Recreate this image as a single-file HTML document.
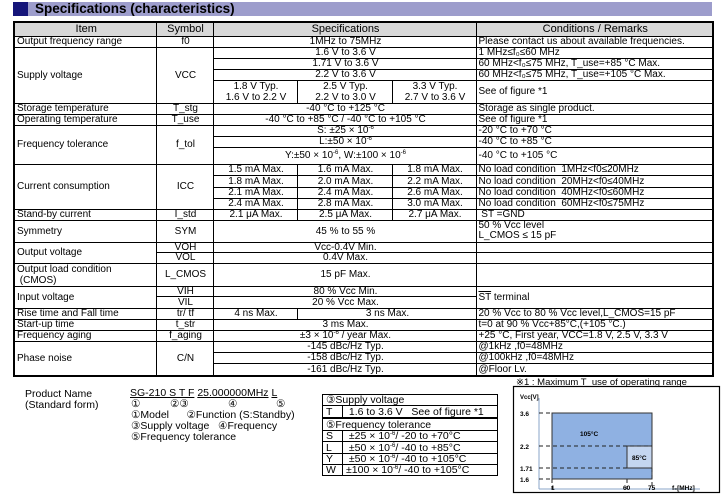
<!DOCTYPE html>
<html><head><meta charset="utf-8"><style>
*{margin:0;padding:0;box-sizing:border-box}
body{width:726px;height:503px;background:#fff;font-family:"Liberation Sans",Arial,sans-serif;color:#000;position:relative;overflow:hidden;font-size:10px}
.bar{position:absolute;left:13px;top:2px;width:699px;height:14px;background:#9d9dcc}
.sq{position:absolute;left:13px;top:2px;width:15px;height:14px;background:#15157a}
.title{position:absolute;left:35px;top:0px;font-weight:bold;font-size:13.5px;line-height:17px}
table.m{position:absolute;left:13px;top:21px;width:699px;border-collapse:collapse;table-layout:fixed;border:2px solid #000}
table.m td{border:1px solid #000;padding:0 0 0 2px;font-size:10px;line-height:9px;white-space:nowrap;overflow:hidden;vertical-align:middle}
td.c{text-align:center;padding:0}
tr.h td{background:#d8d8d8;text-align:center;font-size:11px}
sup{font-size:6px;line-height:0;vertical-align:4px}
.bt{position:absolute;font-size:10.5px;line-height:11px;white-space:nowrap}
.u{text-decoration:underline}
table.s{position:absolute;border-collapse:collapse;border:1.5px solid #000}
table.s td{border:1px solid #000;font-size:10.5px;line-height:10px;padding:0 3px;white-space:nowrap}
</style></head><body>
<div class="bar"></div><div class="sq"></div>
<div class="title">Specifications (characteristics)</div>
<table class="m">
<colgroup><col style="width:142px"><col style="width:57px"><col style="width:84px"><col style="width:95px"><col style="width:84px"><col style="width:237px"></colgroup>
<tr class="h" style="height:14px"><td>Item</td><td>Symbol</td><td colspan="3">Specifications</td><td>Conditions / Remarks</td></tr>
<tr style="height:11px"><td>Output frequency range</td><td class="c">f0</td><td class="c" colspan="3">1MHz to 75MHz</td><td>Please contact us about available frequencies.</td></tr>
<tr style="height:11px"><td rowspan="4">Supply voltage</td><td class="c" rowspan="4">VCC</td><td class="c" colspan="3">1.6 V to 3.6 V</td><td>1 MHz≤f₀≤60 MHz</td></tr>
<tr style="height:11px"><td class="c" colspan="3">1.71 V to 3.6 V</td><td>60 MHz&lt;f₀≤75 MHz, T_use=+85 °C Max.</td></tr>
<tr style="height:11px"><td class="c" colspan="3">2.2 V to 3.6 V</td><td>60 MHz&lt;f₀≤75 MHz, T_use=+105 °C Max.</td></tr>
<tr style="height:22px"><td class="c" style="line-height:11px">1.8 V Typ.<br>1.6 V to 2.2 V</td><td class="c" style="line-height:11px">2.5 V Typ.<br>2.2 V to 3.0 V</td><td class="c" style="line-height:11px">3.3 V Typ.<br>2.7 V to 3.6 V</td><td>See of figure *1</td></tr>
<tr style="height:11px"><td>Storage temperature</td><td class="c">T_stg</td><td class="c" colspan="3">-40 °C to +125 °C</td><td>Storage as single product.</td></tr>
<tr style="height:11px"><td>Operating temperature</td><td class="c">T_use</td><td class="c" colspan="3">-40 °C to +85 °C / -40 °C to +105 °C</td><td>See of figure *1</td></tr>
<tr style="height:11px"><td rowspan="3">Frequency tolerance</td><td class="c" rowspan="3">f_tol</td><td class="c" colspan="3">S: ±25 × 10<sup>-6</sup></td><td>-20 °C to +70 °C</td></tr>
<tr style="height:11px"><td class="c" colspan="3">L:±50 × 10<sup>-6</sup></td><td>-40 °C to +85 °C</td></tr>
<tr style="height:17px"><td class="c" colspan="3">Y:±50 × 10<sup>-6</sup>, W:±100 × 10<sup>-6</sup></td><td>-40 °C to +105 °C</td></tr>
<tr style="height:11px"><td rowspan="4">Current consumption</td><td class="c" rowspan="4">ICC</td><td class="c">1.5 mA Max.</td><td class="c">1.6 mA Max.</td><td class="c">1.8 mA Max.</td><td>No load condition &nbsp;1MHz&lt;f0≤20MHz</td></tr>
<tr style="height:12px"><td class="c">1.8 mA Max.</td><td class="c">2.0 mA Max.</td><td class="c">2.2 mA Max.</td><td>No load condition &nbsp;20MHz&lt;f0≤40MHz</td></tr>
<tr style="height:11px"><td class="c">2.1 mA Max.</td><td class="c">2.4 mA Max.</td><td class="c">2.6 mA Max.</td><td>No load condition &nbsp;40MHz&lt;f0≤60MHz</td></tr>
<tr style="height:11px"><td class="c">2.4 mA Max.</td><td class="c">2.8 mA Max.</td><td class="c">3.0 mA Max.</td><td>No load condition &nbsp;60MHz&lt;f0≤75MHz</td></tr>
<tr style="height:11px"><td>Stand-by current</td><td class="c">I_std</td><td class="c">2.1 μA Max.</td><td class="c">2.5 μA Max.</td><td class="c">2.7 μA Max.</td><td>&nbsp;ST =GND</td></tr>
<tr style="height:22px"><td>Symmetry</td><td class="c">SYM</td><td class="c" colspan="3">45 % to 55 %</td><td style="line-height:10px">50 % Vcc level<br>L_CMOS ≤ 15 pF</td></tr>
<tr style="height:10px"><td rowspan="2">Output voltage</td><td class="c">VOH</td><td class="c" colspan="3">Vcc-0.4V Min.</td><td></td></tr>
<tr style="height:11px"><td class="c">VOL</td><td class="c" colspan="3">0.4V Max.</td><td></td></tr>
<tr style="height:22px"><td style="line-height:11px">Output load condition<br>&nbsp;(CMOS)</td><td class="c">L_CMOS</td><td class="c" colspan="3">15 pF Max.</td><td></td></tr>
<tr style="height:10px"><td rowspan="2">Input voltage</td><td class="c">VIH</td><td class="c" colspan="3">80 % Vcc Min.</td><td rowspan="2"><span style="text-decoration:overline">ST</span> terminal</td></tr>
<tr style="height:12px"><td class="c">VIL</td><td class="c" colspan="3">20 % Vcc Max.</td></tr>
<tr style="height:11px"><td>Rise time and Fall time</td><td class="c">tr/ tf</td><td class="c">4 ns Max.</td><td class="c" colspan="2">3 ns Max.</td><td>20 % Vcc to 80 % Vcc level,L_CMOS=15 pF</td></tr>
<tr style="height:11px"><td>Start-up time</td><td class="c">t_str</td><td class="c" colspan="3">3 ms Max.</td><td>t=0 at 90 % Vcc+85°C,(+105 °C.)</td></tr>
<tr style="height:11px"><td>Frequency aging</td><td class="c">f_aging</td><td class="c" colspan="3">±3 × 10<sup>-6</sup> / year Max.</td><td>+25 °C, First year, VCC=1.8 V, 2.5 V, 3.3 V</td></tr>
<tr style="height:11px"><td rowspan="3">Phase noise</td><td class="c" rowspan="3">C/N</td><td class="c" colspan="3">-145 dBc/Hz Typ.</td><td>@1kHz ,f0=48MHz</td></tr>
<tr style="height:11px"><td class="c" colspan="3">-158 dBc/Hz Typ.</td><td>@100kHz ,f0=48MHz</td></tr>
<tr style="height:13px"><td class="c" colspan="3">-161 dBc/Hz Typ.</td><td>@Floor Lv.</td></tr>
</table>

<div class="bt" style="left:25px;top:389px">Product Name</div>
<div class="bt" style="left:25px;top:400px">(Standard form)</div>
<div class="bt" style="left:130px;top:388px"><span class="u">SG-210 S T F</span> <span class="u">25.000000MHz</span> <span class="u">L</span></div>
<div class="bt" style="left:131px;top:399px">①</div>
<div class="bt" style="left:170px;top:399px">②③</div>
<div class="bt" style="left:228px;top:399px">④</div>
<div class="bt" style="left:276px;top:399px">⑤</div>
<div class="bt" style="left:131px;top:410px">①Model &nbsp;&nbsp;&nbsp;&nbsp;&nbsp;②Function (S:Standby)</div>
<div class="bt" style="left:131px;top:421px">③Supply voltage &nbsp;&nbsp;④Frequency</div>
<div class="bt" style="left:131px;top:432px">⑤Frequency tolerance</div>

<table class="s" style="left:322px;top:394px;width:176px">
<tr style="height:11px"><td colspan="2">③Supply voltage</td></tr>
<tr style="height:12px"><td style="width:20px">T</td><td>&nbsp;1.6 to 3.6 V &nbsp;&nbsp;See of figure *1</td></tr>
</table>
<table class="s" style="left:322px;top:418px;width:176px">
<tr style="height:12px"><td colspan="2">⑤Frequency tolerance</td></tr>
<tr style="height:10px"><td style="width:20px">S</td><td>&nbsp;±25 × 10<sup>-6</sup>/ -20 to +70°C</td></tr>
<tr style="height:12px"><td>L</td><td>&nbsp;±50 × 10<sup>-6</sup>/ -40 to +85°C</td></tr>
<tr style="height:11px"><td>Y</td><td>&nbsp;±50 × 10<sup>-6</sup>/ -40 to +105°C</td></tr>
<tr style="height:11px"><td>W</td><td>±100 × 10<sup>-6</sup>/ -40 to +105°C</td></tr>
</table>

<div class="bt" style="left:516px;top:378px;font-size:9.5px;line-height:9px">※1 : Maximum T_use of operating range</div>
<svg style="position:absolute;left:0;top:0" width="726" height="503" font-family="Liberation Sans,Arial,sans-serif">
<rect x="513.5" y="386.5" width="206" height="106" fill="#fff" stroke="#000" stroke-width="1.2"/>
<text x="520" y="399" font-size="6" font-weight="bold">Vcc[V]</text>
<line x1="539" y1="398" x2="539" y2="489" stroke="#8aa6c8" stroke-width="1"/>
<line x1="539" y1="489" x2="700" y2="489" stroke="#8aa6c8" stroke-width="1"/>
<rect x="552" y="413" width="100" height="66" fill="#8fb1e2" stroke="#333" stroke-width="1"/>
<rect x="627" y="446" width="25" height="22" fill="#c4d6f0" stroke="#333" stroke-width="1"/>
<g stroke="#222" stroke-width="1" stroke-dasharray="4,3" fill="none">
<line x1="539" y1="413" x2="552" y2="413"/>
<line x1="539" y1="446" x2="652" y2="446"/>
<line x1="539" y1="468" x2="627" y2="468"/>
<line x1="539" y1="479" x2="552" y2="479"/>
<line x1="552" y1="479" x2="552" y2="489"/>
<line x1="627" y1="479" x2="627" y2="489"/>
<line x1="652" y1="468" x2="652" y2="489"/>
</g>
<g font-size="6.5" font-weight="bold">
<text x="520" y="416">3.6</text><text x="520" y="449">2.2</text><text x="520" y="471">1.71</text><text x="520" y="482">1.6</text>
<text x="580" y="436">105°C</text><text x="632" y="460">85°C</text>
<text x="551" y="490">1</text><text x="623" y="490">60</text><text x="648" y="490">75</text><text x="672" y="490">f₀[MHz]</text>
</g>
</svg>
</body></html>
